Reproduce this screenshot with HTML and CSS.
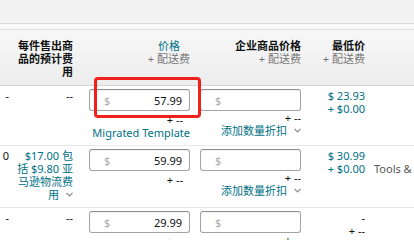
FILE: index.html
```html
<!DOCTYPE html>
<html lang="zh-CN">
<head>
	<meta charset="UTF-8">
	<title>管理库存 - 价格</title>
	<link rel="stylesheet" href="styles.css">
</head>
<body>
	<div class="topbar"></div>
	<div class="gapbar"></div>
	<div class="grid">
		<div class="row head">
			<div class="cell c-a"></div>
			<div class="cell c-b"><b>每件售出商<br>品的预计费<br>用</b></div>
			<div class="cell c-c">
				<span class="center-head">
					<a class="link">价格</a><br>
					<span class="muted">+ 配送费</span>
				</span>
			</div>
			<div class="cell c-d"><b>企业商品价格</b><br><span class="muted">+ 配送费</span></div>
			<div class="cell c-e"><b>最低价</b><br><span class="muted">+ 配送费</span></div>
			<div class="cell c-f"></div>
		</div>

		<div class="row">
			<div class="cell c-a">-</div>
			<div class="cell c-b">--</div>
			<div class="cell c-c">
				<div class="price-box"><span class="cur">$</span><span>57.99</span></div>
				<div class="ship">+ --</div>
				<a class="link">Migrated Template</a>
				<div class="mark"></div>
			</div>
			<div class="cell c-d">
				<div class="price-box"><span class="cur">$</span><span></span></div>
				<div class="ship-d">+ --</div>
				<a class="link">添加数量折扣<svg class="chev" width="7" height="5" viewBox="0 0 7 5"><polyline points="0.5,0.8 3.5,3.8 6.5,0.8"/></svg></a>
			</div>
			<div class="cell c-e teal">$ 23.93<br>+ $0.00</div>
			<div class="cell c-f"></div>
		</div>

		<div class="row">
			<div class="cell c-a">0</div>
			<div class="cell c-b"><a class="link">$17.00 包<br>括 $9.80 亚<br>马逊物流费<br>用<svg class="chev" width="7" height="5" viewBox="0 0 7 5"><polyline points="0.5,0.8 3.5,3.8 6.5,0.8"/></svg></a></div>
			<div class="cell c-c">
				<div class="price-box"><span class="cur">$</span><span>59.99</span></div>
				<div class="ship">+ --</div>
			</div>
			<div class="cell c-d">
				<div class="price-box"><span class="cur">$</span><span></span></div>
				<div class="ship-d">+ --</div>
				<a class="link">添加数量折扣<svg class="chev" width="7" height="5" viewBox="0 0 7 5"><polyline points="0.5,0.8 3.5,3.8 6.5,0.8"/></svg></a>
			</div>
			<div class="cell c-e teal">$ 30.99<br>+ $0.00</div>
			<div class="cell c-f"><span class="cat">Tools &amp; Home Improvement</span></div>
		</div>

		<div class="row">
			<div class="cell c-a">-</div>
			<div class="cell c-b">--</div>
			<div class="cell c-c">
				<div class="price-box"><span class="cur">$</span><span>29.99</span></div>
				<div class="ship">+ --</div>
			</div>
			<div class="cell c-d">
				<div class="price-box"><span class="cur">$</span><span></span></div>
				<div class="ship-d">+ --</div>
			</div>
			<div class="cell c-e">-<br>+ --</div>
			<div class="cell c-f"></div>
		</div>
	</div>
</body>
</html>
```

FILE: styles.css
```css
*{
	margin: 0;
	padding: 0;
	box-sizing: border-box;
}
body{
	width: 414px;
	height: 240px;
	overflow: hidden;
	background: #fff;
	font-family: "Noto Sans", "Noto Sans CJK SC", sans-serif;
	font-size: 11px;
	line-height: 13px;
	color: #0f1111;
}
.topbar{
	height: 24px;
	background: #f2f2f2;
	border-bottom: 1px solid #dadada;
}
.gapbar{
	height: 6px;
	background: #f9f9f9;
	border-bottom: 1px solid #e2e2e2;
}
.grid{
	width: 414px;
	overflow: hidden;
}
.row{
	display: grid;
	grid-template-columns: 12px 66px 117px 111px 64px 1fr;
	border-bottom: 1px solid #e7e7e7;
	padding: 3px 0 6px;
	white-space: nowrap;
}
.row.head{
	height: 56px;
	padding-top: 9px;
	background: linear-gradient(#f7f7f7, #ededed);
	border-bottom: 1px solid #d5d5d5;
}
.cell{
	text-align: right;
}
.c-a{
	padding-right: 3px;
}
.c-b{
	padding-right: 5px;
}
.c-c{
	position: relative;
	padding: 0 5px 0 11px;
}
.c-d{
	padding: 0 5px;
}
.c-e{
	padding-right: 5px;
}
.c-f{
	text-align: left;
	padding-left: 4px;
}
b{
	font-weight: bold;
}
.muted{
	color: #767676;
}
.link{
	color: #007185;
	text-decoration: none;
}
.teal{
	color: #007185;
}
.center-head{
	display: inline-block;
	text-align: center;
}
.price-box{
	height: 22px;
	display: flex;
	justify-content: space-between;
	align-items: center;
	padding: 0 7px 0 14px;
	border: 1px solid #a3a3a3;
	border-top-color: #8f8f8f;
	border-radius: 3px;
	background: #fff;
	box-shadow: inset 0 1px 1px rgba(0, 0, 0, 0.06);
}
.cur{
	color: #aaa;
}
.ship{
	margin-top: 2px;
	padding-right: 7px;
}
.ship-d{
	padding-right: 0;
}
.chev{
	margin-left: 7px;
	vertical-align: 2px;
	fill: none;
	stroke: #888;
	stroke-width: 1.2;
}
.cat{
	display: inline-block;
	padding-top: 13px;
	color: #565959;
}
/* 高亮框 */
.mark{
	position: absolute;
	left: 16px;
	top: -12px;
	width: 107px;
	height: 41px;
	border: 3px solid #f0201c;
	border-radius: 4px;
}
```
